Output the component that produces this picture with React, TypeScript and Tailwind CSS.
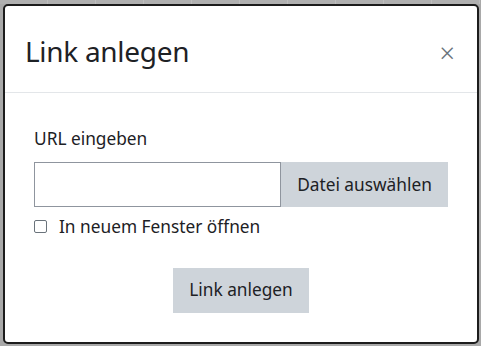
import React from "react";

export default function App() {
  const font = { fontFamily: '"Noto Sans", "Open Sans", sans-serif' };
  return (
    <div className="w-[481px] h-[346px] bg-[#a9a9a9] relative overflow-hidden" style={font}>
      <div className="h-[4px] flex">
        {[0, 1, 2, 3, 4, 5, 6, 7, 8, 9].map((i) => (
          <div key={i} className="h-[4px] w-[48px] border-r border-[#bdbdbd] bg-[#b0b0b0]" />
        ))}
      </div>
      <div className="absolute left-[3px] top-[4px] w-[476px] h-[340px] bg-white border-2 border-[#1c1c1c] rounded-[5px] flex flex-col">
        <div className="h-[87px] flex items-center justify-between pl-[20px] pr-[22px] border-b border-[#e3e6e9]">
          <h5 className="text-[28px] text-[#1d2125] leading-none tracking-[-0.3px] pt-[4px]">Link anlegen</h5>
          <span className="text-[27px] text-[#6a737b] leading-none font-light pt-[6px]">×</span>
        </div>
        <div className="pl-[29px] pr-[28px] pt-[37px] flex flex-col">
          <label className="text-[17.3px] text-[#1d2125] leading-none">URL eingeben</label>
          <div className="flex mt-[15px] h-[45px]">
            <input className="w-[247px] h-[45px] border border-[#8f959e] outline-none" />
            <button className="w-[167px] h-[45px] bg-[#ced4da] text-[17.3px] text-[#1d2125]">Datei auswählen</button>
          </div>
          <div className="flex items-center mt-[11px] gap-[12px]">
            <span className="w-[13px] h-[13px] border border-[#6a737b] rounded-[2px] bg-white block" />
            <span className="text-[17.3px] text-[#1d2125] leading-none">In neuem Fenster öffnen</span>
          </div>
          <div className="flex justify-center mt-[32px]">
            <button className="w-[136px] h-[45px] bg-[#ced4da] text-[17.3px] text-[#1d2125] ml-[-1px]">Link anlegen</button>
          </div>
        </div>
      </div>
    </div>
  );
}
